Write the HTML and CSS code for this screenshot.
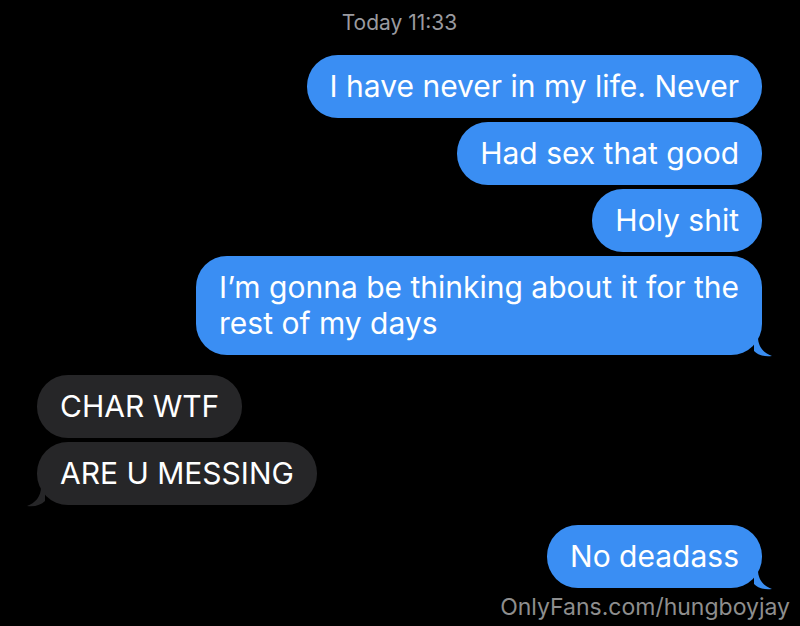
FILE: index.html
```html
<!DOCTYPE html>
<html lang="en">
<head>
    <meta charset="UTF-8">
    <meta name="viewport" content="width=device-width, initial-scale=1.0">
    <title>Messages</title>
    <link rel="stylesheet" href="styles.css">
</head>
<body>
    <div class="thread">
        <div class="stamp">Today 11:33</div>

        <div class="group sent">
            <div class="bubble">I have never in my life. Never</div>
            <div class="bubble">Had sex that good</div>
            <div class="bubble">Holy shit</div>
            <div class="bubble tail">I’m gonna be thinking about it for the<br>rest of my days
                <svg class="tail-mark" viewBox="0 0 20 20" width="20" height="20"><path d="M0 0 L4 0 C4 10 10 16 18 19 C10 20 4 18 0 14 Z"/></svg>
            </div>
        </div>

        <div class="group received">
            <div class="bubble">CHAR WTF</div>
            <div class="bubble tail">ARE U MESSING
                <svg class="tail-mark" viewBox="0 0 20 20" width="20" height="20"><path d="M20 0 L16 0 C16 10 10 16 2 19 C10 20 16 18 20 14 Z"/></svg>
            </div>
        </div>

        <div class="group sent">
            <div class="bubble tail">No deadass
                <svg class="tail-mark" viewBox="0 0 20 20" width="20" height="20"><path d="M0 0 L4 0 C4 10 10 16 18 19 C10 20 4 18 0 14 Z"/></svg>
            </div>
        </div>

        <div class="watermark">OnlyFans.com/hungboyjay</div>
    </div>
</body>
</html>
```

FILE: styles.css
```css
body {
    margin: 0;
    padding: 0;
    background-color: #000;
    font-family: Inter, "Noto Sans", sans-serif;
    color: #fff;
}
.thread {
    display: flex;
    flex-direction: column;
    padding: 8px 38px 0 37px;
}
.stamp {
    text-align: center;
    color: #9a9a9f;
    font-size: 21px;
    line-height: 30px;
    margin-bottom: 17px;
}
.group {
    display: flex;
    flex-direction: column;
    gap: 4px;
    margin-bottom: 20px;
}
.group.sent {
    align-items: flex-end;
}
.group.received {
    align-items: flex-start;
}
.bubble {
    position: relative;
    font-size: 30px;
    line-height: 36px;
    padding: 13px 23px 14px 23px;
    border-radius: 31px;
}
.sent .bubble {
    background-color: #3a8ef3;
}
.received .bubble {
    background-color: #262628;
}
.tail-mark {
    position: absolute;
    bottom: -2px;
}
.sent .tail-mark {
    right: -12px;
    fill: #3a8ef3;
}
.received .tail-mark {
    left: -12px;
    fill: #262628;
}
.watermark {
    align-self: flex-end;
    margin-top: -15px;
    margin-right: -28px;
    color: #8e8e8e;
    font-size: 23px;
    line-height: 28px;
}
```
